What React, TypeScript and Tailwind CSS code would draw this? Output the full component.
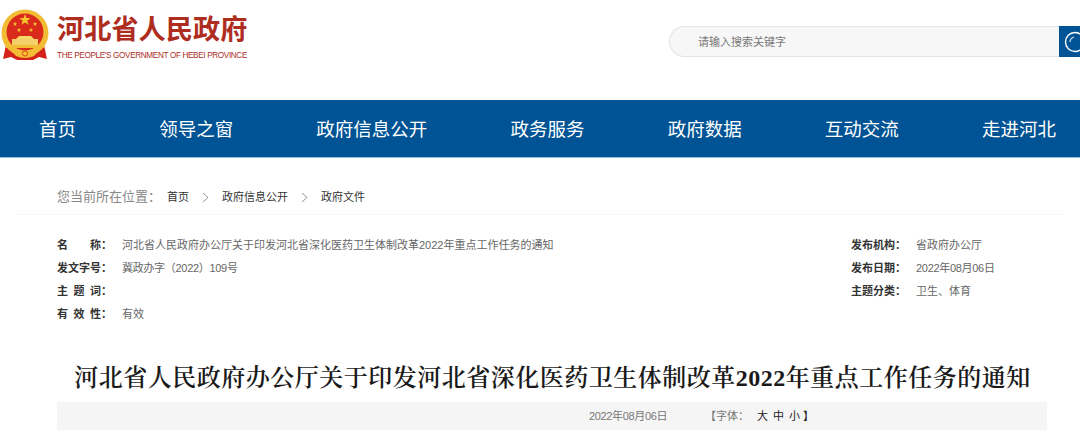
const navItems = ["首页", "领导之窗", "政府信息公开", "政务服务", "政府数据", "互动交流", "走进河北"];

const cjk = "font-['Liberation_Sans','Noto_Sans_CJK_SC',sans-serif]";

function Star({ x, y, r }: { x: number; y: number; r: number }) {
  const pts = Array.from({ length: 10 }, (_, i) => {
    const a = (Math.PI / 5) * i - Math.PI / 2;
    const d = i % 2 === 0 ? r : r * 0.4;
    return `${(x + d * Math.cos(a)).toFixed(2)},${(y + d * Math.sin(a)).toFixed(2)}`;
  }).join(" ");
  return <polygon points={pts} fill="#f6c52c" />;
}

function Emblem() {
  return (
    <svg width="48" height="52" viewBox="0 0 48 52" className="shrink-0">
      {/* ribbon */}
      <path d="M5 36 L2 50 L10 48 L16 51 L32 51 L38 48 L46 50 L43 36 Z" fill="#d5231c" />
      {/* wheat ring */}
      <circle cx="24" cy="24" r="23.5" fill="#f2bd35" />
      <circle cx="24" cy="23" r="18.5" fill="#d92a1c" />
      <Star x={24} y={11} r={6} />
      <Star x={14} y={15} r={2.4} />
      <Star x={34} y={15} r={2.4} />
      <Star x={18} y={21} r={2.4} />
      <Star x={30} y={21} r={2.4} />
      {/* gate */}
      <path d="M15 30 L33 30 L30 27 L18 27 Z" fill="#f5d76a" />
      <rect x="11" y="30" width="26" height="6" fill="#f5d06a" />
      <rect x="5" y="36" width="38" height="3" fill="#f2bd35" />
      <path d="M9 40 Q24 49 39 40 L33 47 Q24 51 15 47 Z" fill="#f2bd35" />
      <circle cx="24" cy="44.5" r="2.6" fill="#f6c52c" stroke="#d5231c" strokeWidth="0.8" />
    </svg>
  );
}

function SearchGlyph() {
  return (
    <svg width="30" height="30" viewBox="0 0 30 30" fill="none" className="shrink-0">
      <circle cx="15" cy="15" r="9.5" stroke="#ffffff" strokeWidth="1.4" />
      <path d="M10 15 a5.5 5.5 0 0 1 4-5" stroke="#cfe0ee" strokeWidth="1.2" />
    </svg>
  );
}

function Chevron() {
  return (
    <svg width="7" height="11" viewBox="0 0 7 11" fill="none" className="mx-[13px] shrink-0">
      <path d="M1 1 L6 5.5 L1 10" stroke="#888888" strokeWidth="0.9" />
    </svg>
  );
}

function MetaRow({ label, value, spread, tight }: { label: string[]; value?: string; spread?: boolean; tight?: boolean }) {
  return (
    <div className="flex h-[23px] items-center text-[11px]">
      <div className={`flex w-[65px] shrink-0 pr-[10px] font-bold text-[#333] ${spread ? "justify-between" : ""}`}>
        {label.map((ch, i) => (
          <span key={i}>{ch}</span>
        ))}
      </div>
      <span className={`whitespace-nowrap text-[#666] ${tight ? "tracking-[-0.3px]" : ""}`}>{value}</span>
    </div>
  );
}

export default function App() {
  return (
    <div className={`h-[435px] w-[1080px] overflow-hidden bg-white ${cjk}`}>
      <header className="flex h-[100px] items-start justify-between">
        <div className="flex items-start pl-[1px] pt-[9px]">
          <Emblem />
          <div className="ml-[8px] flex flex-col pt-[2px]">
            <span className="text-[27.2px] font-bold leading-[38px] text-[#ae2d1f]">河北省人民政府</span>
            <span className="mt-[1px] whitespace-nowrap text-[8.2px] leading-[11px] tracking-[-0.36px] text-[#ae2d1f]">
              THE PEOPLE'S GOVERNMENT OF HEBEI PROVINCE
            </span>
          </div>
        </div>
        <div className="mt-[26px] flex h-[31px]">
          <div className="flex w-[390px] items-center rounded-l-full border border-r-0 border-[#e3e3e3] bg-[#f7f7f7] pl-[28px] pt-[1px] text-[11px] text-[#777]">
            请输入搜索关键字
          </div>
          <div className="flex w-[21px] items-center overflow-hidden bg-[#005394] pl-[1px]">
            <SearchGlyph />
          </div>
        </div>
      </header>

      <nav className="flex h-[58px] items-center justify-between border-b border-[#9dbfdb] bg-[#005394] pl-[39px] pr-[24px] pt-[2px] text-[18.5px] text-white">
        {navItems.map((item) => (
          <span key={item} className="whitespace-nowrap">
            {item}
          </span>
        ))}
      </nav>

      <div className="mx-[15px] flex h-[57px] items-center border-b border-[#f7f7f7] pl-[42px] pt-[22px] text-[11px] text-[#333]">
        <span className="w-[110px] text-[13px] text-[#888]">您当前所在位置：</span>
        <span>首页</span>
        <Chevron />
        <span>政府信息公开</span>
        <Chevron />
        <span>政府文件</span>
      </div>

      <div className="flex justify-between pl-[57px] pt-[19px]">
        <div className="flex flex-col">
          <MetaRow label={["名", "称："]} value="河北省人民政府办公厅关于印发河北省深化医药卫生体制改革2022年重点工作任务的通知" spread />
          <MetaRow label={["发文字号："]} value="冀政办字（2022）109号" tight />
          <MetaRow label={["主", "题", "词："]} spread />
          <MetaRow label={["有", "效", "性："]} value="有效" spread />
        </div>
        <div className="flex w-[229px] flex-col">
          <MetaRow label={["发布机构："]} value="省政府办公厅" />
          <MetaRow label={["发布日期："]} value="2022年08月06日" tight />
          <MetaRow label={["主题分类："]} value="卫生、体育" />
        </div>
      </div>

      <h1 className="mt-[35px] whitespace-nowrap pl-[25px] text-center font-['Liberation_Serif','Noto_Serif_CJK_SC','Noto_Sans_CJK_SC',serif] text-[24px] font-semibold leading-[34px] tracking-[0.5px] text-[#1a1a1a]">
        河北省人民政府办公厅关于印发河北省深化医药卫生体制改革2022年重点工作任务的通知
      </h1>

      <div className="mx-[57px] mt-[7px] flex h-[28px] w-[990px] items-center bg-[#f5f5f5] pl-[532px] text-[11px] text-[#777]">
        <span className="tracking-[-0.35px]">2022年08月06日</span>
        <span className="ml-[38px]">【字体：</span>
        <span className="ml-[8px] tracking-[5px] text-[#222]">大中小</span>
        <span className="ml-[-2px] text-[#222]">】</span>
      </div>
    </div>
  );
}
